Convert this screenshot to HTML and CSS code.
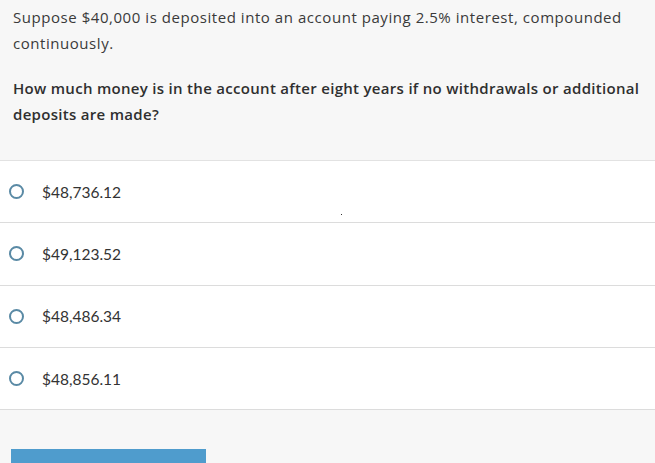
FILE: index.html
```html
<!DOCTYPE html>
<html>
<head>
<meta charset="utf-8">
<link rel="stylesheet" href="styles.css">
</head>
<body>
<div class="page">
  <div class="question">
    <p class="prompt">Suppose $40,000 is deposited into an account paying 2.5% interest, compounded continuously.</p>
    <p class="ask">How much money is in the account after eight years if no withdrawals or additional deposits are made?</p>
  </div>
  <div class="options">
    <label class="option"><span class="radio"></span><span class="value">$48,736.12</span><span class="speck"></span></label>
    <label class="option"><span class="radio"></span><span class="value">$49,123.52</span></label>
    <label class="option"><span class="radio"></span><span class="value">$48,486.34</span></label>
    <label class="option"><span class="radio"></span><span class="value">$48,856.11</span></label>
  </div>
  <div class="footer">
    <button class="submit" type="button"></button>
  </div>
</div>
</body>
</html>
```
FILE: styles.css
```css
html, body {
  margin: 0;
  padding: 0;
  background: #f7f7f7;
}
body {
  font-family: "Open Sans", "Lato", sans-serif;
  color: #333;
}
.page {
  width: 655px;
  height: 463px;
  overflow: hidden;
}
.question {
  padding: 4px 13px 33px 13px;
  background: #f7f7f7;
}
.question p {
  margin: 0;
  font-size: 15px;
  line-height: 26px;
}
.prompt {
  margin-bottom: 19px !important;
  letter-spacing: 0.55px;
  color: #3a3a3a;
}
.ask {
  font-weight: 600;
  letter-spacing: 0.3px;
  color: #2f2f2f;
}
.options {
  background: #fff;
  border-top: 1px solid #e2e2e2;
}
.option {
  position: relative;
  display: flex;
  align-items: center;
  height: 61.3px;
  border-bottom: 1px solid #dcdcdc;
  padding-left: 9px;
}
.radio {
  width: 15px;
  height: 15px;
  border: 2px solid #5a8aa5;
  border-radius: 50%;
  box-sizing: border-box;
  margin-right: 18px;
}
.value {
  font-family: "Lato", sans-serif;
  font-size: 15.5px;
  color: #333;
}
.speck {
  position: absolute;
  left: 341px;
  top: 53px;
  width: 1px;
  height: 1px;
  background: #333;
}
.footer {
  padding: 39px 11px 0;
}
.submit {
  display: block;
  width: 195px;
  height: 40px;
  border: none;
  background: #4f9ccd;
  padding: 0;
}
```
